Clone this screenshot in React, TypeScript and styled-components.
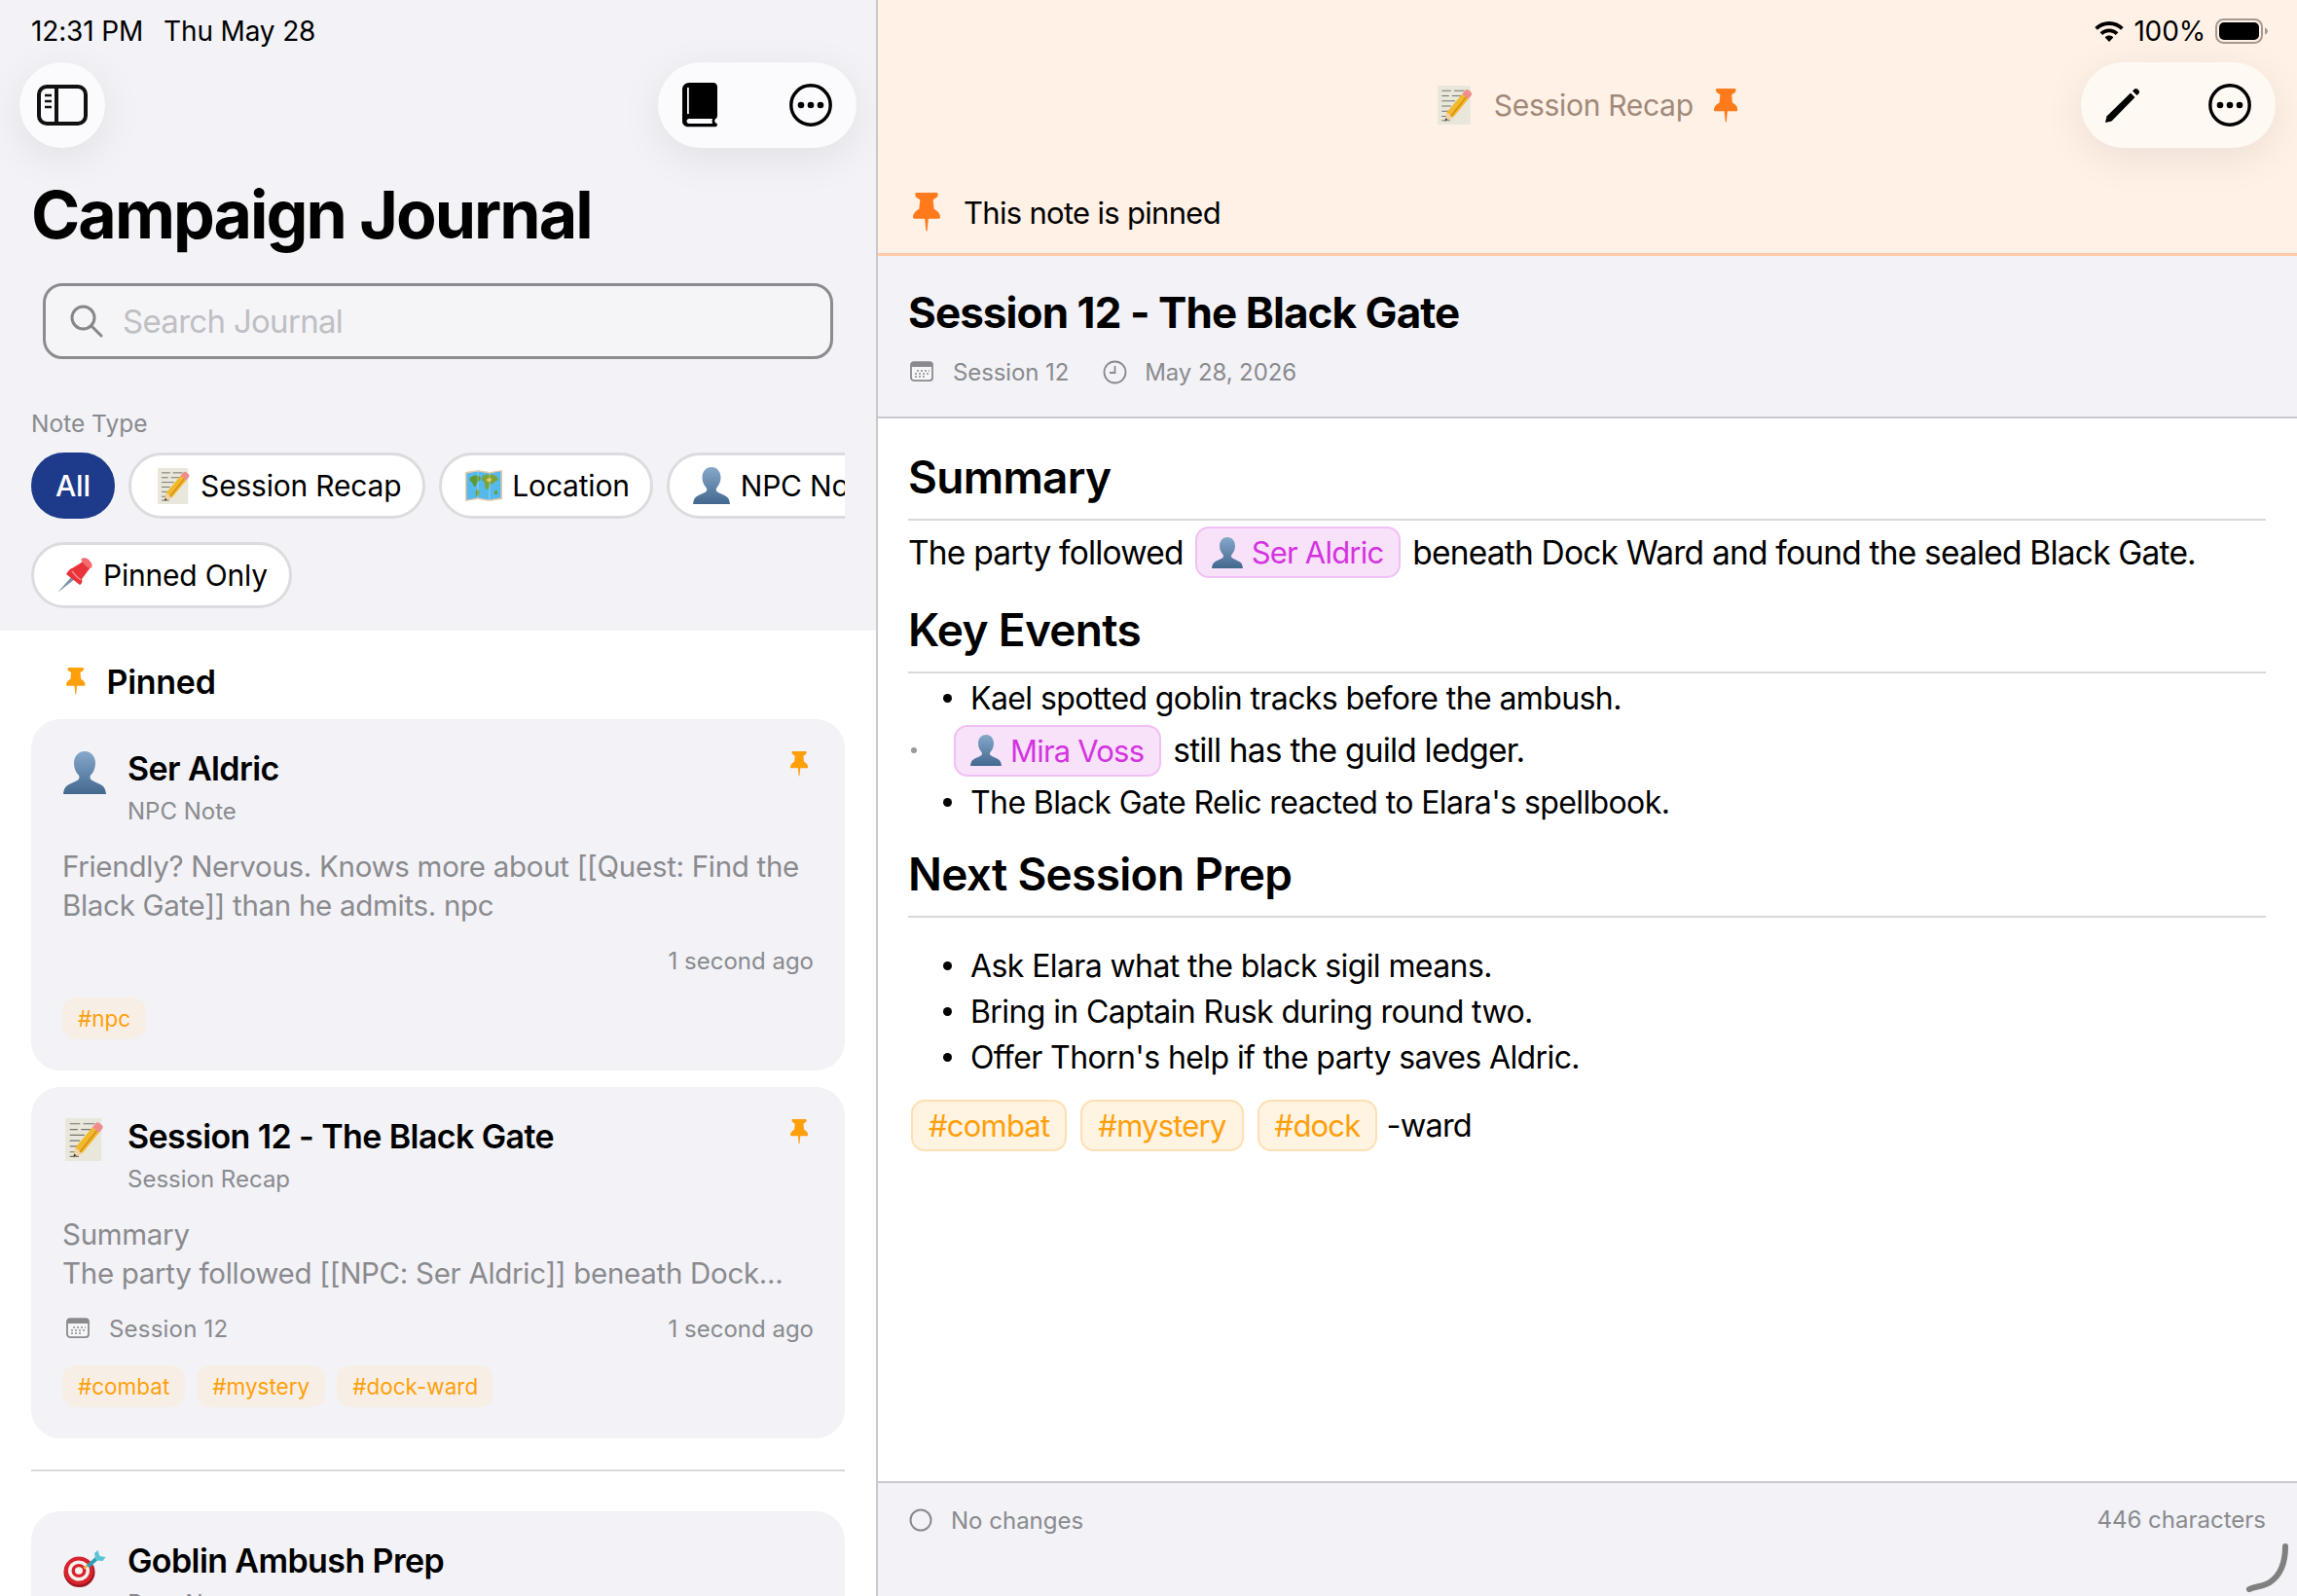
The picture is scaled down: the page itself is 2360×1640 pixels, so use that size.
import React, { useId } from 'react';
import styled, { createGlobalStyle } from 'styled-components';

const GlobalStyle = createGlobalStyle`
  html, body {
    margin: 0;
    padding: 0;
    background: #fff;
  }
  body {
    font-family: Inter, "Noto Sans", sans-serif;
    color: #000;
    -webkit-font-smoothing: antialiased;
  }
  * {
    box-sizing: border-box;
  }
`;

const Screen = styled.div`
  position: relative;
  display: flex;
  width: 2360px;
  height: 1640px;
  overflow: hidden;
  background: #fff;
`;

const Sidebar = styled.aside`
  display: flex;
  flex-direction: column;
  flex: 0 0 902px;
  height: 100%;
  border-right: 2px solid #c9c9cd;
`;

const SidebarHead = styled.div`
  display: flex;
  flex-direction: column;
  padding-bottom: 23px;
  background: #f2f2f7;
`;

const StatusRow = styled.div<{ $end?: boolean }>`
  display: flex;
  align-items: center;
  justify-content: ${(p) => (p.$end ? 'flex-end' : 'flex-start')};
  height: 64px;
  padding: ${(p) => (p.$end ? '0 30px 0 0' : '0 0 0 32px')};
  font-size: 28px;
  letter-spacing: -0.15px;
`;

const StatusDate = styled.span`
  margin-left: 21px;
`;

const BatteryPercent = styled.span`
  margin: 0 10px;
`;

const Toolbar = styled.div`
  display: flex;
  justify-content: space-between;
  padding: 0 20px;
`;

const GlassButton = styled.button<{ $tint?: string; $width: number }>`
  display: flex;
  align-items: center;
  justify-content: ${(p) => (p.$width > 100 ? 'space-between' : 'center')};
  width: ${(p) => p.$width}px;
  height: 88px;
  padding: 0 ${(p) => (p.$width > 100 ? '25px' : '0')};
  border: 0;
  border-radius: 44px;
  background: ${(p) => p.$tint || '#fbfbfd'};
  box-shadow: 0 10px 44px rgba(0, 0, 0, 0.08);
`;

const LargeTitle = styled.h1`
  margin: 28px 0 0 32px;
  font-size: 68px;
  line-height: 80px;
  font-weight: 700;
  letter-spacing: -1.95px;
`;

const SearchField = styled.div`
  display: flex;
  align-items: center;
  gap: 20px;
  height: 78px;
  margin: 31px 44px 0;
  padding-left: 25px;
  border: 3px solid #8b8b90;
  border-radius: 20px;
  background: #f5f5f8;
`;

const SearchHint = styled.span`
  font-size: 33px;
  letter-spacing: -0.7px;
  color: #bfbfc4;
`;

const FilterLabel = styled.div`
  margin: 51px 0 0 32px;
  font-size: 24.5px;
  line-height: 30px;
  color: #8a8a8e;
`;

const ChipRow = styled.div`
  display: flex;
  gap: 14px;
  margin: 15px 32px 0;
  overflow: hidden;
`;

const PinnedChipRow = styled(ChipRow)`
  margin-top: 24px;
`;

const Chip = styled.div<{ $active?: boolean; $tight?: boolean }>`
  display: flex;
  flex: none;
  align-items: center;
  gap: ${(p) => (p.$tight ? 10 : 11)}px;
  height: 68px;
  padding: ${(p) => (p.$active ? '0 22px' : `0 ${p.$tight ? 21 : 22}px 0 24px`)};
  border: 3px solid ${(p) => (p.$active ? '#1e3a8a' : '#dcdce0')};
  border-radius: 34px;
  background: ${(p) => (p.$active ? '#1e3a8a' : '#fff')};
  color: ${(p) => (p.$active ? '#fff' : '#000')};
  font-size: 30px;
  font-weight: ${(p) => (p.$active ? 500 : 400)};
  letter-spacing: -0.2px;
`;

const ChipMemo = styled.span`
  display: flex;
  margin-left: 3px;
`;

const NoteList = styled.div`
  flex: 1;
  padding: 30px 32px 0;
  background: #fff;
  overflow: hidden;
`;

const SectionTitle = styled.div`
  display: flex;
  align-items: center;
  gap: 22px;
  height: 44px;
  margin-bottom: 17px;
  padding-left: 36px;
  font-size: 34px;
  font-weight: 600;
  letter-spacing: -0.3px;
`;

const NoteCard = styled.article`
  position: relative;
  margin-bottom: 17px;
  padding: 30px 32px 32px;
  border-radius: 30px;
  background: #f2f2f7;
`;

const ListDivider = styled.hr`
  height: 2px;
  margin: 32px 0 41px;
  border: 0;
  background: #d9d9dd;
`;

const CardTop = styled.div`
  display: flex;
  align-items: flex-start;
  gap: 21px;
`;

const CardGlyph = styled.div<{ $top: number }>`
  display: flex;
  justify-content: center;
  flex: 0 0 46px;
  padding-top: ${(p) => p.$top}px;
`;

const CardHeading = styled.div`
  flex: 1;
`;

const CardTitle = styled.div`
  font-size: 34px;
  line-height: 42px;
  font-weight: 600;
  letter-spacing: -0.6px;
`;

const CardKind = styled.div`
  margin-top: 8px;
  font-size: 24px;
  line-height: 30px;
  color: #8a8a8e;
`;

const CardPin = styled.div`
  position: absolute;
  top: 33px;
  right: 38px;
`;

const CardBody = styled.div`
  margin-top: 21px;
  font-size: 29.5px;
  line-height: 40px;
  letter-spacing: -0.3px;
  color: #8a8a8e;
`;

const CardFoot = styled.div`
  display: flex;
  align-items: center;
  justify-content: space-between;
  height: 30px;
  margin-top: 22px;
  font-size: 24px;
  color: #8a8a8e;
`;

const CardSession = styled.div`
  display: flex;
  align-items: center;
  gap: 20px;
  padding-left: 4px;
  letter-spacing: 0.2px;
`;

const TagRow = styled.div`
  display: flex;
  gap: 12px;
  margin-top: 23px;
`;

const CardTag = styled.span`
  display: flex;
  align-items: center;
  height: 43px;
  padding: 0 16px;
  border-radius: 14px;
  background: #f7efe5;
  color: #ff9f0a;
  font-size: 22.5px;
`;

const Detail = styled.main`
  position: relative;
  display: flex;
  flex-direction: column;
  flex: 1;
`;

const PinnedHead = styled.header`
  height: 263px;
  border-bottom: 3px solid #ffcba6;
  background: #fff1e6;
`;

const NavRow = styled.div`
  display: grid;
  grid-template-columns: 1fr auto 1fr;
  align-items: center;
  height: 88px;
  padding: 0 22px;
`;

const NavTitle = styled.div`
  display: flex;
  grid-column: 2;
  align-items: center;
  color: #a08979;
  font-size: 30px;
  letter-spacing: -0.3px;
`;

const NavTitleText = styled.span`
  margin: 0 21px 0 22px;
`;

const NavActions = styled.div`
  display: flex;
  justify-content: flex-end;
`;

const PinBanner = styled.div`
  display: flex;
  align-items: center;
  gap: 24px;
  height: 44px;
  margin-top: 44px;
  padding-left: 36px;
  font-size: 31px;
  letter-spacing: -0.7px;
`;

const NoteHeader = styled.section`
  height: 167px;
  padding: 31px 32px 0 31px;
  border-bottom: 2px solid #c9c9cd;
  background: #f2f2f7;
`;

const NoteTitle = styled.h2`
  margin: 0;
  font-size: 44px;
  line-height: 54px;
  font-weight: 700;
  letter-spacing: -0.93px;
`;

const NoteMeta = styled.div`
  display: flex;
  align-items: center;
  height: 32px;
  margin-top: 18px;
  padding-left: 2px;
  color: #8a8a8e;
  font-size: 24px;
  letter-spacing: -0.1px;
`;

const MetaText = styled.span`
  margin: 0 35px 0 20px;
`;

const ClockText = styled.span`
  margin-left: 18px;
`;

const NoteContent = styled.section`
  flex: 1;
  padding: 32px 32px 0 31px;
  font-size: 33.5px;
  letter-spacing: -0.8px;
`;

const Heading = styled.h3`
  height: 73px;
  margin: 0;
  border-bottom: 2px solid #d9d9dd;
  font-size: 46px;
  line-height: 56px;
  font-weight: 600;
  letter-spacing: -0.7px;
`;

const Paragraph = styled.div`
  display: flex;
  align-items: center;
  gap: 12px;
  height: 84px;
  padding-bottom: 19px;
`;

const MentionPill = styled.span`
  display: flex;
  align-items: center;
  gap: 9px;
  height: 53px;
  padding: 0 16px 0 15px;
  border: 2px solid #f1c0f4;
  border-radius: 14px;
  background: #f7e2f9;
  color: #d433e0;
  font-size: 31px;
`;

const BulletList = styled.ul`
  margin: 0;
  padding: 0;
  list-style: none;
`;

const BulletItem = styled.li`
  display: flex;
  align-items: center;
  gap: 19px;
  height: 47px;
  padding-left: 36px;
  font-size: 32px;
  letter-spacing: -0.6px;

  &::before {
    content: '';
    flex: none;
    width: 9px;
    height: 9px;
    border-radius: 50%;
    background: #000;
  }
`;

const MentionItem = styled.li`
  display: flex;
  align-items: center;
  gap: 12px;
  height: 60px;
  padding-left: 3px;

  &::before {
    content: '';
    flex: none;
    width: 6px;
    height: 6px;
    margin-right: 26px;
    border-radius: 50%;
    background: #9a9a9e;
  }
`;

const PrepList = styled(BulletList)`
  padding-top: 26px;
`;

const KeyList = styled(BulletList)`
  padding: 2px 0 22px;
`;

const HashRow = styled.div`
  display: flex;
  align-items: center;
  gap: 14px;
  margin: 20px 0 0 3px;
`;

const HashTag = styled.span`
  display: flex;
  align-items: center;
  height: 53px;
  padding: 0 16px;
  border: 2px solid #ffdfb3;
  border-radius: 14px;
  background: #fff3e2;
  color: #ff9f0a;
  font-size: 31px;
`;

const HashTail = styled.span`
  margin-left: -5px;
  font-size: 32.5px;
`;

const SaveBar = styled.footer`
  display: flex;
  align-items: flex-start;
  justify-content: space-between;
  height: 118px;
  padding: 22px 32px 0;
  border-top: 2px solid #c9c9cd;
  background: #f2f2f7;
  color: #8a8a8e;
  font-size: 24px;
`;

const SaveState = styled.div`
  display: flex;
  align-items: center;
  gap: 19px;
  height: 32px;
`;

const CharCount = styled.div`
  line-height: 32px;
`;

const ResizeGrip = styled.svg`
  position: absolute;
  right: 8px;
  bottom: 4px;
`;

const PinIcon = ({ size, color }: { size: number; color: string }) => (
  <svg width={size * 0.7} height={size} viewBox="0 0 23 36" preserveAspectRatio="none">
    <path
      d="M3 0h17c.6 0 1 .5 1 1v2.200c0 .6-1.700 1.800-4 3.300l.8 8.500c2.700 1.700 5.200 4 5.200 7.600 0 .8-.6 1.400-1.200 1.400H13l-1 11c0 .6-1 .6-1 0l-1-11H1.200C.6 24 0 23.400 0 22.600 0 19 2.500 16.700 5.200 15L6 6.500C3.700 5 2 3.800 2 3.200V1c0-.5.4-1 1-1z"
      fill={color}
    />
  </svg>
);

const SidebarIcon = () => (
  <svg width="52" height="42" viewBox="0 0 52 42" fill="none" stroke="#111" strokeWidth="4">
    <rect x="2" y="2" width="48" height="38" rx="8" />
    <path d="M20 2v38" />
    <path d="M8 11h7M8 17h7M8 23h7" strokeWidth="2.600" />
  </svg>
);

const BookIcon = () => (
  <svg width="36" height="46" viewBox="0 0 36 46">
    <path
      d="M7 0h25c2.200 0 4 1.800 4 4v30c0 1.600-.8 2.600-2 3.200-1 .7-1 3 0 3.800.9.700 2 .8 2 2.300 0 1.200-1 2-2 2H6c-3.600 0-6-2.400-6-6V7C0 3 3 0 7 0z"
      fill="#000"
    />
    <path d="M5 5.500c0-1 1.800-1 1.800 0V32H5z" fill="#fbfbfd" />
    <path d="M7 37h24c-.5 1.600-.5 3.400 0 5H7c-3.200 0-3.200-5 0-5z" fill="#fbfbfd" />
  </svg>
);

const EllipsisIcon = ({ tint = '#000' }: { tint?: string }) => (
  <svg width="44" height="44" viewBox="0 0 44 44">
    <circle cx="22" cy="22" r="20.200" fill="none" stroke={tint} strokeWidth="3.400" />
    <circle cx="12" cy="22" r="3.300" fill={tint} />
    <circle cx="22" cy="22" r="3.300" fill={tint} />
    <circle cx="32" cy="22" r="3.300" fill={tint} />
  </svg>
);

const PencilIcon = () => (
  <svg width="36" height="36" viewBox="0 0 36 36">
    <path d="M0 36l1.500-6.500L26 5.500l4.500 4.500L6.500 34.500z" fill="#000" />
    <path d="M28 3.500l1.800-1.800c1-1 2.600-1 3.500 0l1 1c1 1 1 2.500 0 3.500L32.500 8z" fill="#000" />
  </svg>
);

const SearchIcon = () => (
  <svg width="34" height="34" viewBox="0 0 34 34" fill="none" stroke="#86868b" strokeWidth="3">
    <circle cx="13.500" cy="13.500" r="11.500" />
    <path d="M22 22l10 10" strokeLinecap="round" />
  </svg>
);

const WifiIcon = () => (
  <svg width="30" height="21" viewBox="0 0 30 21">
    <path d="M15 0c5.600 0 10.800 2.200 14.700 6l-2.600 2.800C23.900 5.700 19.600 3.900 15 3.900S6.100 5.700 2.900 8.800L.3 6C4.200 2.200 9.400 0 15 0z" />
    <path d="M15 7.400c3.600 0 6.900 1.400 9.400 3.800l-2.700 2.800c-1.800-1.700-4.200-2.700-6.700-2.700s-4.900 1-6.700 2.700l-2.700-2.800c2.500-2.400 5.800-3.800 9.400-3.800z" />
    <path d="M15 14.600c1.700 0 3.200.6 4.300 1.800L15 21l-4.300-4.600c1.100-1.200 2.600-1.800 4.300-1.800z" />
  </svg>
);

const BatteryIcon = () => (
  <svg width="54" height="26" viewBox="0 0 54 26">
    <rect x="1" y="1" width="47" height="24" rx="7.500" fill="none" stroke="#a59a92" strokeWidth="2" />
    <rect x="4" y="4" width="41" height="18" rx="5" fill="#000" />
    <path d="M51 9.500c1.700.6 3 2 3 3.500s-1.300 2.900-3 3.500z" fill="#a59a92" />
  </svg>
);

const CalendarIcon = ({ size = 24 }: { size?: number }) => (
  <svg width={size} height={size * 0.88} viewBox="0 0 24 21">
    <rect x="1" y="1" width="22" height="19" rx="3" fill="#f6f6f9" stroke="#8a8a8e" strokeWidth="1.800" />
    <path d="M1 6V4c0-1.700 1.300-3 3-3h16c1.700 0 3 1.300 3 3v2z" fill="#8a8a8e" />
    <path
      d="M7 10h2M11 10h2M15 10h2M19 10h1M5 13h2M9 13h2M13 13h2M17 13h2M5 16h2M9 16h2M13 16h2"
      stroke="#8a8a8e"
      strokeWidth="1.500"
    />
  </svg>
);

const ClockIcon = () => (
  <svg width="25" height="25" viewBox="0 0 25 25" fill="none" stroke="#8a8a8e" strokeWidth="1.800">
    <circle cx="12.500" cy="12.500" r="11" />
    <path d="M12.500 6v7H7" />
  </svg>
);

const MemoEmoji = ({ size = 38 }: { size?: number }) => (
  <svg width={size * 0.9} height={size} viewBox="0 0 34 38">
    <rect width="32" height="38" fill="#e9e7dc" />
    <path
      d="M4 5h9M16 5h10M4 10h7M14 10h12M4 15h13M4 20h9M4 25h7M4 30h6M4 34h8"
      stroke="#77746c"
      strokeWidth="1"
    />
    <path d="M7 35l2-9L24 8l6 5-15 18z" fill="#f3b92c" />
    <path d="M7 35l2-9 6 5z" fill="#efd3a7" />
    <path d="M7 35l.7-3.400 2.400 1.700z" fill="#444" />
    <path d="M24 8l3-3.500c1-1 2-1 3.500 0l2 1.800c1 1 1 2.200.3 3.200L30 13z" fill="#ef8d8d" />
    <path d="M13 30L28 11" stroke="#d78f16" strokeWidth="1.500" />
  </svg>
);

const MapEmoji = ({ size = 38 }: { size?: number }) => (
  <svg width={size} height={size * 0.84} viewBox="0 0 38 32">
    <path d="M0 2l13-2 12 2 13-2v30l-13 2-12-2-13 2z" fill="#e3c9a8" />
    <path d="M1.500 3.500l11.500-2 12 2 11.500-2v27l-11.500 2-12-2-11.500 2z" fill="#56b9ec" />
    <path d="M5 8c3-3 8-3 10-1s0 4-2 5-1 5-3 5-2-4-4-5-2-3-1-4z" fill="#5d9a34" />
    <path d="M18 6c3-2 9-2 13 0s3 5 0 6-2 3-4 2-2 5-4 6-3-3-3-6-3-2-3-4 0-3 1-4z" fill="#7aa33a" />
    <path d="M22 9c2-1 4-1 5 0s-1 3-3 3-3-2-2-3z" fill="#e4c24d" />
    <path d="M12 20c2 0 3 2 2 5s-2 3-3 1 0-6 1-6zM31 21c2 0 3 1 2 3s-3 1-3 0 0-3 1-3z" fill="#6c9e34" />
    <path d="M13 .500v30M25 2v30" stroke="#ffffff" strokeOpacity=".35" strokeWidth="1" />
  </svg>
);

const BustEmoji = ({ size = 38 }: { size?: number }) => {
  const id = useId();
  return (
    <svg width={size} height={size} viewBox="0 0 38 38">
      <defs>
        <linearGradient id={id} x1="0" y1="0" x2="0" y2="1">
          <stop offset="0" stopColor="#86a9c9" />
          <stop offset="1" stopColor="#43688f" />
        </linearGradient>
      </defs>
      <path
        d="M19 0c6 0 9.500 5 9.500 10.500 0 4-1.500 8-4 10.500-1 1-1 3 0 4 1.500 1.500 6.500 3 9.500 5 2.500 1.500 3.500 4 4 8H0c.5-4 1.500-6.500 4-8 3-2 8-3.500 9.500-5 1-1 1-3 0-4-2.500-2.500-4-6.500-4-10.500C9.500 5 13 0 19 0z"
        fill={`url(#${id})`}
      />
    </svg>
  );
};

const PushpinEmoji = () => (
  <svg width="36" height="36" viewBox="0 0 36 36">
    <path d="M0 36l15-17 3 3z" fill="#7e95a8" />
    <path d="M15 11L28 3l6 7-9 12c1 3 0 5-2 6L9 17c2-3 4-6 6-6z" fill="#e8333a" />
    <path d="M25 1c2-1.500 5-1 7.500 1.500S36.500 8 35 10c-1 1.500-3.500 1-6-1.500S23.500 2.500 25 1z" fill="#f56a6d" />
    <path d="M15 14c3 4 6 7 9 9" stroke="#f78a8c" strokeWidth="1.500" fill="none" />
  </svg>
);

const TargetEmoji = () => (
  <svg width="44" height="38" viewBox="0 0 44 38">
    <ellipse cx="16.500" cy="22.500" rx="16" ry="15.500" fill="#9c1520" />
    <ellipse cx="16" cy="21" rx="15" ry="14.500" fill="#d9242f" />
    <ellipse cx="16" cy="21" rx="11" ry="10.500" fill="#f6f1ec" />
    <ellipse cx="16" cy="21" rx="7.500" ry="7" fill="#d9242f" />
    <ellipse cx="16" cy="21" rx="4" ry="3.700" fill="#f6f1ec" />
    <path d="M20.500 17.500l4-3 1.500 2-4 3z" fill="#e9b949" />
    <path d="M24 15l9-8 2.500 3-9 8z" fill="#2f9fb3" />
    <path d="M33 9l-1-6 3.500-3 2 6 6 1-3 4-6-.5z" fill="#5cc4d6" />
  </svg>
);

const Tags = ({ items }: { items: string[] }) => (
  <TagRow>
    {items.map((item) => (
      <CardTag key={item}>{item}</CardTag>
    ))}
  </TagRow>
);

const App = () => (
  <Screen>
    <GlobalStyle />
    <Sidebar>
      <SidebarHead>
        <StatusRow>
          <span>12:31 PM</span>
          <StatusDate>Thu May 28</StatusDate>
        </StatusRow>
        <Toolbar>
          <GlassButton $width={88}>
            <SidebarIcon />
          </GlassButton>
          <GlassButton $width={204}>
            <BookIcon />
            <EllipsisIcon />
          </GlassButton>
        </Toolbar>
        <LargeTitle>Campaign Journal</LargeTitle>
        <SearchField>
          <SearchIcon />
          <SearchHint>Search Journal</SearchHint>
        </SearchField>
        <FilterLabel>Note Type</FilterLabel>
        <ChipRow>
          <Chip $active>All</Chip>
          <Chip>
            <ChipMemo>
              <MemoEmoji size={37} />
            </ChipMemo>
            Session Recap
          </Chip>
          <Chip $tight>
            <MapEmoji />
            Location
          </Chip>
          <Chip>
            <BustEmoji />
            NPC Note
          </Chip>
        </ChipRow>
        <PinnedChipRow>
          <Chip>
            <PushpinEmoji />
            Pinned Only
          </Chip>
        </PinnedChipRow>
      </SidebarHead>
      <NoteList>
        <SectionTitle>
          <PinIcon size={28} color="#ff9f0a" />
          Pinned
        </SectionTitle>
        <NoteCard>
          <CardTop>
            <CardGlyph $top={3}>
              <BustEmoji size={44} />
            </CardGlyph>
            <CardHeading>
              <CardTitle>Ser Aldric</CardTitle>
              <CardKind>NPC Note</CardKind>
            </CardHeading>
          </CardTop>
          <CardPin>
            <PinIcon size={26} color="#ff9f0a" />
          </CardPin>
          <CardBody>
            Friendly? Nervous. Knows more about [[Quest: Find the
            <br />
            Black Gate]] than he admits. npc
          </CardBody>
          <CardFoot>
            <span />
            <span>1 second ago</span>
          </CardFoot>
          <Tags items={['#npc']} />
        </NoteCard>
        <NoteCard>
          <CardTop>
            <CardGlyph $top={2}>
              <MemoEmoji size={44} />
            </CardGlyph>
            <CardHeading>
              <CardTitle>Session 12 - The Black Gate</CardTitle>
              <CardKind>Session Recap</CardKind>
            </CardHeading>
          </CardTop>
          <CardPin>
            <PinIcon size={26} color="#ff9f0a" />
          </CardPin>
          <CardBody>
            Summary
            <br />
            The party followed [[NPC: Ser Aldric]] beneath Dock...
          </CardBody>
          <CardFoot>
            <CardSession>
              <CalendarIcon />
              Session 12
            </CardSession>
            <span>1 second ago</span>
          </CardFoot>
          <Tags items={['#combat', '#mystery', '#dock-ward']} />
        </NoteCard>
        <ListDivider />
        <NoteCard>
          <CardTop>
            <CardGlyph $top={10}>
              <TargetEmoji />
            </CardGlyph>
            <CardHeading>
              <CardTitle>Goblin Ambush Prep</CardTitle>
              <CardKind>Prep Note</CardKind>
            </CardHeading>
          </CardTop>
        </NoteCard>
      </NoteList>
    </Sidebar>
    <Detail>
      <PinnedHead>
        <StatusRow $end>
          <WifiIcon />
          <BatteryPercent>100%</BatteryPercent>
          <BatteryIcon />
        </StatusRow>
        <NavRow>
          <NavTitle>
            <MemoEmoji size={40} />
            <NavTitleText>Session Recap</NavTitleText>
            <PinIcon size={35} color="#ff7a1a" />
          </NavTitle>
          <NavActions>
            <GlassButton $width={200} $tint="#fff9f3">
              <PencilIcon />
              <EllipsisIcon />
            </GlassButton>
          </NavActions>
        </NavRow>
        <PinBanner>
          <PinIcon size={40} color="#ff7a1a" />
          This note is pinned
        </PinBanner>
      </PinnedHead>
      <NoteHeader>
        <NoteTitle>Session 12 - The Black Gate</NoteTitle>
        <NoteMeta>
          <CalendarIcon />
          <MetaText>Session 12</MetaText>
          <ClockIcon />
          <ClockText>May 28, 2026</ClockText>
        </NoteMeta>
      </NoteHeader>
      <NoteContent>
        <Heading>Summary</Heading>
        <Paragraph>
          The party followed
          <MentionPill>
            <BustEmoji size={32} />
            Ser Aldric
          </MentionPill>
          beneath Dock Ward and found the sealed Black Gate.
        </Paragraph>
        <Heading>Key Events</Heading>
        <KeyList>
          <BulletItem>Kael spotted goblin tracks before the ambush.</BulletItem>
          <MentionItem>
            <MentionPill>
              <BustEmoji size={32} />
              Mira Voss
            </MentionPill>
            still has the guild ledger.
          </MentionItem>
          <BulletItem>The Black Gate Relic reacted to Elara's spellbook.</BulletItem>
        </KeyList>
        <Heading>Next Session Prep</Heading>
        <PrepList>
          <BulletItem>Ask Elara what the black sigil means.</BulletItem>
          <BulletItem>Bring in Captain Rusk during round two.</BulletItem>
          <BulletItem>Offer Thorn's help if the party saves Aldric.</BulletItem>
        </PrepList>
        <HashRow>
          <HashTag>#combat</HashTag>
          <HashTag>#mystery</HashTag>
          <HashTag>#dock</HashTag>
          <HashTail>-ward</HashTail>
        </HashRow>
      </NoteContent>
      <SaveBar>
        <SaveState>
          <svg width="24" height="24" viewBox="0 0 24 24" fill="none" stroke="#8a8a8e" strokeWidth="2">
            <circle cx="12" cy="12" r="10.500" />
          </svg>
          No changes
        </SaveState>
        <CharCount>446 characters</CharCount>
      </SaveBar>
      <ResizeGrip width="46" height="50" viewBox="0 0 46 50" fill="none" stroke="#808080" strokeWidth="6" strokeLinecap="round">
        <path d="M42 3C42 19 38 32 26 40 20 44 12 44 5 47" />
      </ResizeGrip>
    </Detail>
  </Screen>
);

export default App;
